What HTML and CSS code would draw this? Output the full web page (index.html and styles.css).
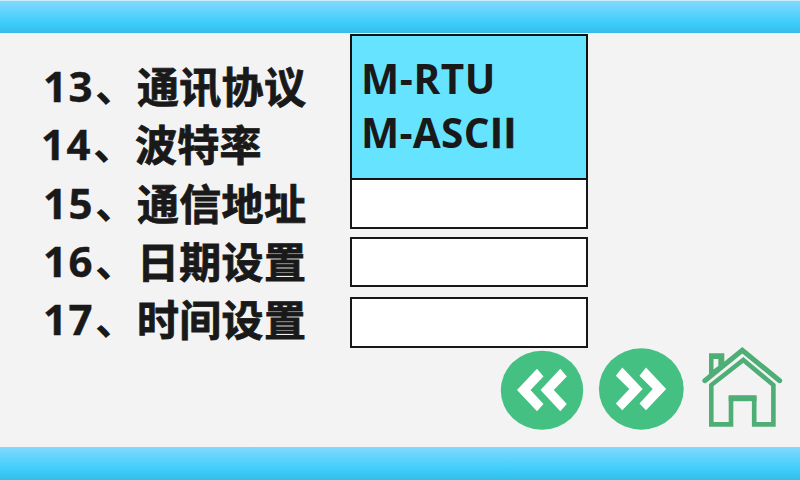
FILE: index.html
```html
<!DOCTYPE html>
<html lang="zh-CN">
<head>
<meta charset="utf-8">
<title>参数设置</title>
<link rel="stylesheet" href="styles.css">
</head>
<body>
<header class="bar bar-top"></header>
<main class="panel">
  <ol class="labels">
    <li><span class="num">13</span><span class="sep">、</span><span class="name">通讯协议</span></li>
    <li class="shifted"><span class="num">14</span><span class="sep">、</span><span class="name">波特率</span></li>
    <li><span class="num">15</span><span class="sep">、</span><span class="name">通信地址</span></li>
    <li><span class="num">16</span><span class="sep">、</span><span class="name">日期设置</span></li>
    <li><span class="num">17</span><span class="sep">、</span><span class="name">时间设置</span></li>
  </ol>
  <div class="fields">
    <div class="options"><div class="rtu">M-RTU</div><div class="ascii">M-ASC<span class="plain">II</span></div></div>
    <div class="field address"></div>
    <div class="field date"></div>
    <div class="field time"></div>
  </div>
</main>
<nav class="controls">
  <svg class="prev" width="84" height="80" viewBox="0 0 84 80"><ellipse cx="42" cy="40.300" rx="41.200" ry="39.500" fill="#43c082"/><g fill="#fff"><path d="M37 18.700L43.500 26.500L30.500 40L43.500 54L37 61.200L17 40Z"/><path d="M60.300 18.700L66.800 26.500L53.800 40L66.800 54L60.300 61.200L40.500 40Z"/></g></svg>
  <svg class="next" width="86" height="82" viewBox="0 0 86 82"><ellipse cx="43.300" cy="41" rx="42.400" ry="40.700" fill="#43c082"/><g fill="#fff"><path d="M24.300 19.500L44.700 41L24.300 62.200L17.800 55.500L31.300 41L17.800 27.700Z"/><path d="M48 19.500L68.200 41L48 62.200L41.500 55.500L54.700 41L41.500 27.700Z"/></g></svg>
  <svg class="home" width="82" height="82" viewBox="0 0 82 82" fill="none" stroke="#4fae76" stroke-width="4.600"><path d="M3.800 34.700L41.300 4.300L78.700 34.700" stroke-width="5" stroke-linecap="round"/><path fill="#4fae76" stroke="none" fill-rule="evenodd" d="M8 7.300H23.300V18L8 31ZM12.500 13V23.500L17.300 20V13Z"/><path d="M10.300 78.400V39L42.300 14L72.400 39V78.400H53.200V52.200H30V78.400Z"/><path d="M27.700 52.200H55.500" stroke-width="6"/></svg>
</nav>
<footer class="bar bar-bottom"></footer>
</body>
</html>
```
FILE: styles.css
```css
* { box-sizing: border-box; }

body {
  display: flex;
  flex-direction: column;
  width: 800px;
  height: 480px;
  margin: 0;
  overflow: hidden;
  background: #f3f3f3;
  color: #191919;
  font-family: "Open Sans", "Noto Sans CJK SC", sans-serif;
  font-weight: 700;
}

.bar {
  height: 33px;
  flex: none;
  background: linear-gradient(#82d9ff, #3dcdfb 68%, #35bde7);
}

.bar-top { border-top: 1px solid #c9efff; }

.panel {
  display: flex;
  height: 315px;
  flex: none;
}

.labels {
  width: 350px;
  margin: 0;
  padding: 24px 0 0 42px;
  list-style: none;
  font-size: 42px;
}

.labels li {
  display: flex;
  height: 58.3px;
  line-height: 58px;
  white-space: nowrap;
}

.labels .shifted { margin-left: -2px; }

.num {
  width: 53px;
  padding-left: 1px;
  letter-spacing: 1.5px;
  -webkit-text-stroke: 0.4px #191919;
}

.sep, .name { font-family: "Noto Sans CJK SC", sans-serif; }
.sep { width: 42px; line-height: 54px; }
.name {
  line-height: 56px;
  letter-spacing: 0.3px;
  -webkit-text-stroke: 0.8px #191919;
}

.fields {
  width: 238px;
  padding-top: 1px;
}

.options {
  height: 146px;
  padding: 16px 0 0 9px;
  border: 2px solid #111;
  background: #66e3ff;
  font-size: 40.5px;
  line-height: 54px;
}

.rtu { letter-spacing: 0.6px; }
.ascii { height: 54px; letter-spacing: 0.3px; }

.plain {
  font-family: "Noto Sans CJK SC", sans-serif;
  line-height: 1;
  letter-spacing: 0;
  -webkit-text-stroke: 0.5px #191919;
}

.field {
  height: 50px;
  border: 2px solid #171717;
  background: #fff;
}

.address { margin-top: -1px; border-top-width: 1px; }
.date { margin-top: 8px; }
.time { height: 51px; margin-top: 10px; }

.controls {
  display: flex;
  height: 99px;
  flex: none;
  padding-left: 500px;
}

.prev { margin-top: 2px; }
.next { margin: 0 0 0 14px; }
.home { margin: -2px 0 0 17px; }
```
